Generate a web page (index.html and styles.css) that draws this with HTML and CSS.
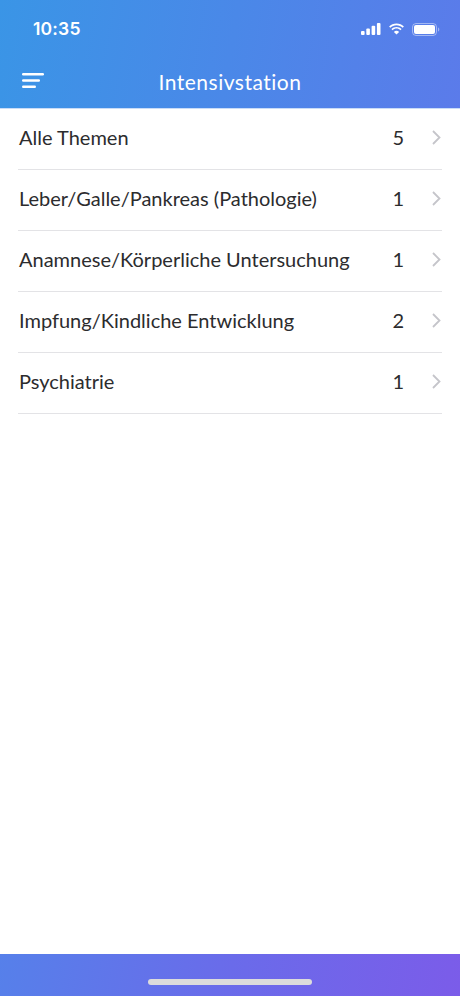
FILE: index.html
```html
<!DOCTYPE html>
<html lang="de">
<head>
    <meta charset="UTF-8">
    <meta name="viewport" content="width=device-width, initial-scale=1.0">
    <title>Intensivstation</title>
    <link rel="stylesheet" href="styles.css">
</head>
<body>
    <div class="app">
        <div class="top-bar">
            <div class="status-bar">
                <div class="time">10:35</div>
                <div class="status-icons">
                    <svg width="20" height="12" viewBox="0 0 20 12">
                        <rect x="0" y="8" width="3.6" height="4" rx="1" fill="#fff"/>
                        <rect x="5.3" y="5.5" width="3.6" height="6.5" rx="1" fill="#fff"/>
                        <rect x="10.6" y="2.8" width="3.6" height="9.2" rx="1" fill="#fff"/>
                        <rect x="15.9" y="0" width="3.6" height="12" rx="1" fill="#fff"/>
                    </svg>
                    <svg width="17" height="12" viewBox="0 0 17 12">
                        <path d="M8.5 2.2c2.4 0 4.6.9 6.2 2.5l1.2-1.2C14 1.6 11.4.5 8.5.5S3 1.6 1.1 3.5l1.2 1.2C3.9 3.1 6.1 2.2 8.5 2.2z" fill="#fff"/>
                        <path d="M8.5 5.6c1.5 0 2.9.6 3.9 1.6l1.2-1.2C12.3 4.7 10.5 3.9 8.5 3.9S4.7 4.7 3.4 6l1.2 1.2c1-1 2.4-1.6 3.9-1.6z" fill="#fff"/>
                        <path d="M8.5 11.5l2.6-2.6c-.7-.7-1.6-1.1-2.6-1.1s-1.9.4-2.6 1.1z" fill="#fff"/>
                    </svg>
                    <svg width="28" height="13" viewBox="0 0 28 13">
                        <rect x="0.5" y="0.5" width="24" height="12" rx="3.5" fill="none" stroke="#fff" stroke-opacity="0.45"/>
                        <rect x="2" y="2" width="21" height="9" rx="2" fill="#fff"/>
                        <path d="M26 4.5v4c.8-.3 1.3-1.1 1.3-2s-.5-1.7-1.3-2z" fill="#fff" fill-opacity="0.45"/>
                    </svg>
                </div>
            </div>
            <div class="nav-bar">
                <svg class="menu-icon" width="24" height="16" viewBox="0 0 24 16">
                    <rect x="0" y="0" width="22" height="2.4" rx="1.2" fill="#fff"/>
                    <rect x="0" y="6.3" width="18" height="2.4" rx="1.2" fill="#fff"/>
                    <rect x="0" y="12.6" width="14" height="2.4" rx="1.2" fill="#fff"/>
                </svg>
                <div class="nav-title">Intensivstation</div>
            </div>
        </div>

        <ul class="topic-list">
            <li class="topic">
                <span class="topic-name">Alle Themen</span>
                <span class="topic-count">5</span>
                <svg class="chevron" width="9" height="15" viewBox="0 0 9 15"><path d="M1 1l6.5 6.5L1 14" fill="none" stroke="#c5c5ca" stroke-width="1.8"/></svg>
            </li>
            <li class="topic">
                <span class="topic-name">Leber/Galle/Pankreas (Pathologie)</span>
                <span class="topic-count">1</span>
                <svg class="chevron" width="9" height="15" viewBox="0 0 9 15"><path d="M1 1l6.5 6.5L1 14" fill="none" stroke="#c5c5ca" stroke-width="1.8"/></svg>
            </li>
            <li class="topic">
                <span class="topic-name">Anamnese/Körperliche Untersuchung</span>
                <span class="topic-count">1</span>
                <svg class="chevron" width="9" height="15" viewBox="0 0 9 15"><path d="M1 1l6.5 6.5L1 14" fill="none" stroke="#c5c5ca" stroke-width="1.8"/></svg>
            </li>
            <li class="topic">
                <span class="topic-name">Impfung/Kindliche Entwicklung</span>
                <span class="topic-count">2</span>
                <svg class="chevron" width="9" height="15" viewBox="0 0 9 15"><path d="M1 1l6.5 6.5L1 14" fill="none" stroke="#c5c5ca" stroke-width="1.8"/></svg>
            </li>
            <li class="topic">
                <span class="topic-name">Psychiatrie</span>
                <span class="topic-count">1</span>
                <svg class="chevron" width="9" height="15" viewBox="0 0 9 15"><path d="M1 1l6.5 6.5L1 14" fill="none" stroke="#c5c5ca" stroke-width="1.8"/></svg>
            </li>
        </ul>

        <div class="bottom-bar">
            <div class="home-indicator"></div>
        </div>
    </div>
</body>
</html>
```

FILE: styles.css
```css
body {
    margin: 0;
    font-family: 'Lato', 'Noto Sans', sans-serif;
    background: #fff;
}

.app {
    width: 460px;
    height: 996px;
    display: flex;
    flex-direction: column;
    overflow: hidden;
}

.top-bar {
    background: linear-gradient(100deg, #3a95e6 0%, #4a88e8 50%, #5b7bea 100%);
    color: #fff;
    height: 108px;
    border-bottom: 1px solid #c9dcf7;
}

.status-bar {
    height: 56px;
    display: flex;
    align-items: center;
    justify-content: space-between;
    padding: 0 20px 0 33px;
}

.time {
    font-family: 'Inter', sans-serif;
    font-weight: 600;
    font-size: 17.5px;
    letter-spacing: 0.2px;
    margin-top: 1px;
}

.status-icons {
    display: flex;
    align-items: center;
    gap: 7px;
    margin-top: 2px;
}

.nav-bar {
    height: 52px;
    display: flex;
    align-items: center;
    position: relative;
    justify-content: center;
}

.menu-icon {
    position: absolute;
    left: 22px;
    top: 17px;
}

.nav-title {
    font-size: 21px;
    letter-spacing: 0.5px;
    margin-top: -2px;
}

.topic-list {
    list-style: none;
    margin: 0;
    padding: 0 18px;
    flex: 1;
}

.topic {
    height: 60px;
    box-sizing: content-box;
    display: flex;
    align-items: center;
    border-bottom: 1px solid #e3e3e6;
    color: #2c2c2e;
    font-size: 20px;
}

.topic-name {
    flex: 1;
    padding-left: 1px;
    margin-top: -5px;
}

.topic-count {
    width: 20px;
    text-align: right;
    margin-right: 28px;
    margin-top: -5px;
}

.chevron {
    margin-right: 1px;
    margin-top: -3px;
}

.bottom-bar {
    height: 42px;
    background: linear-gradient(100deg, #5680ea 0%, #6a6bea 50%, #7b5ce9 100%);
    display: flex;
    justify-content: center;
    padding-top: 25px;
    box-sizing: border-box;
}

.home-indicator {
    width: 164px;
    height: 6px;
    border-radius: 3px;
    background: #dcdcdc;
}
```
